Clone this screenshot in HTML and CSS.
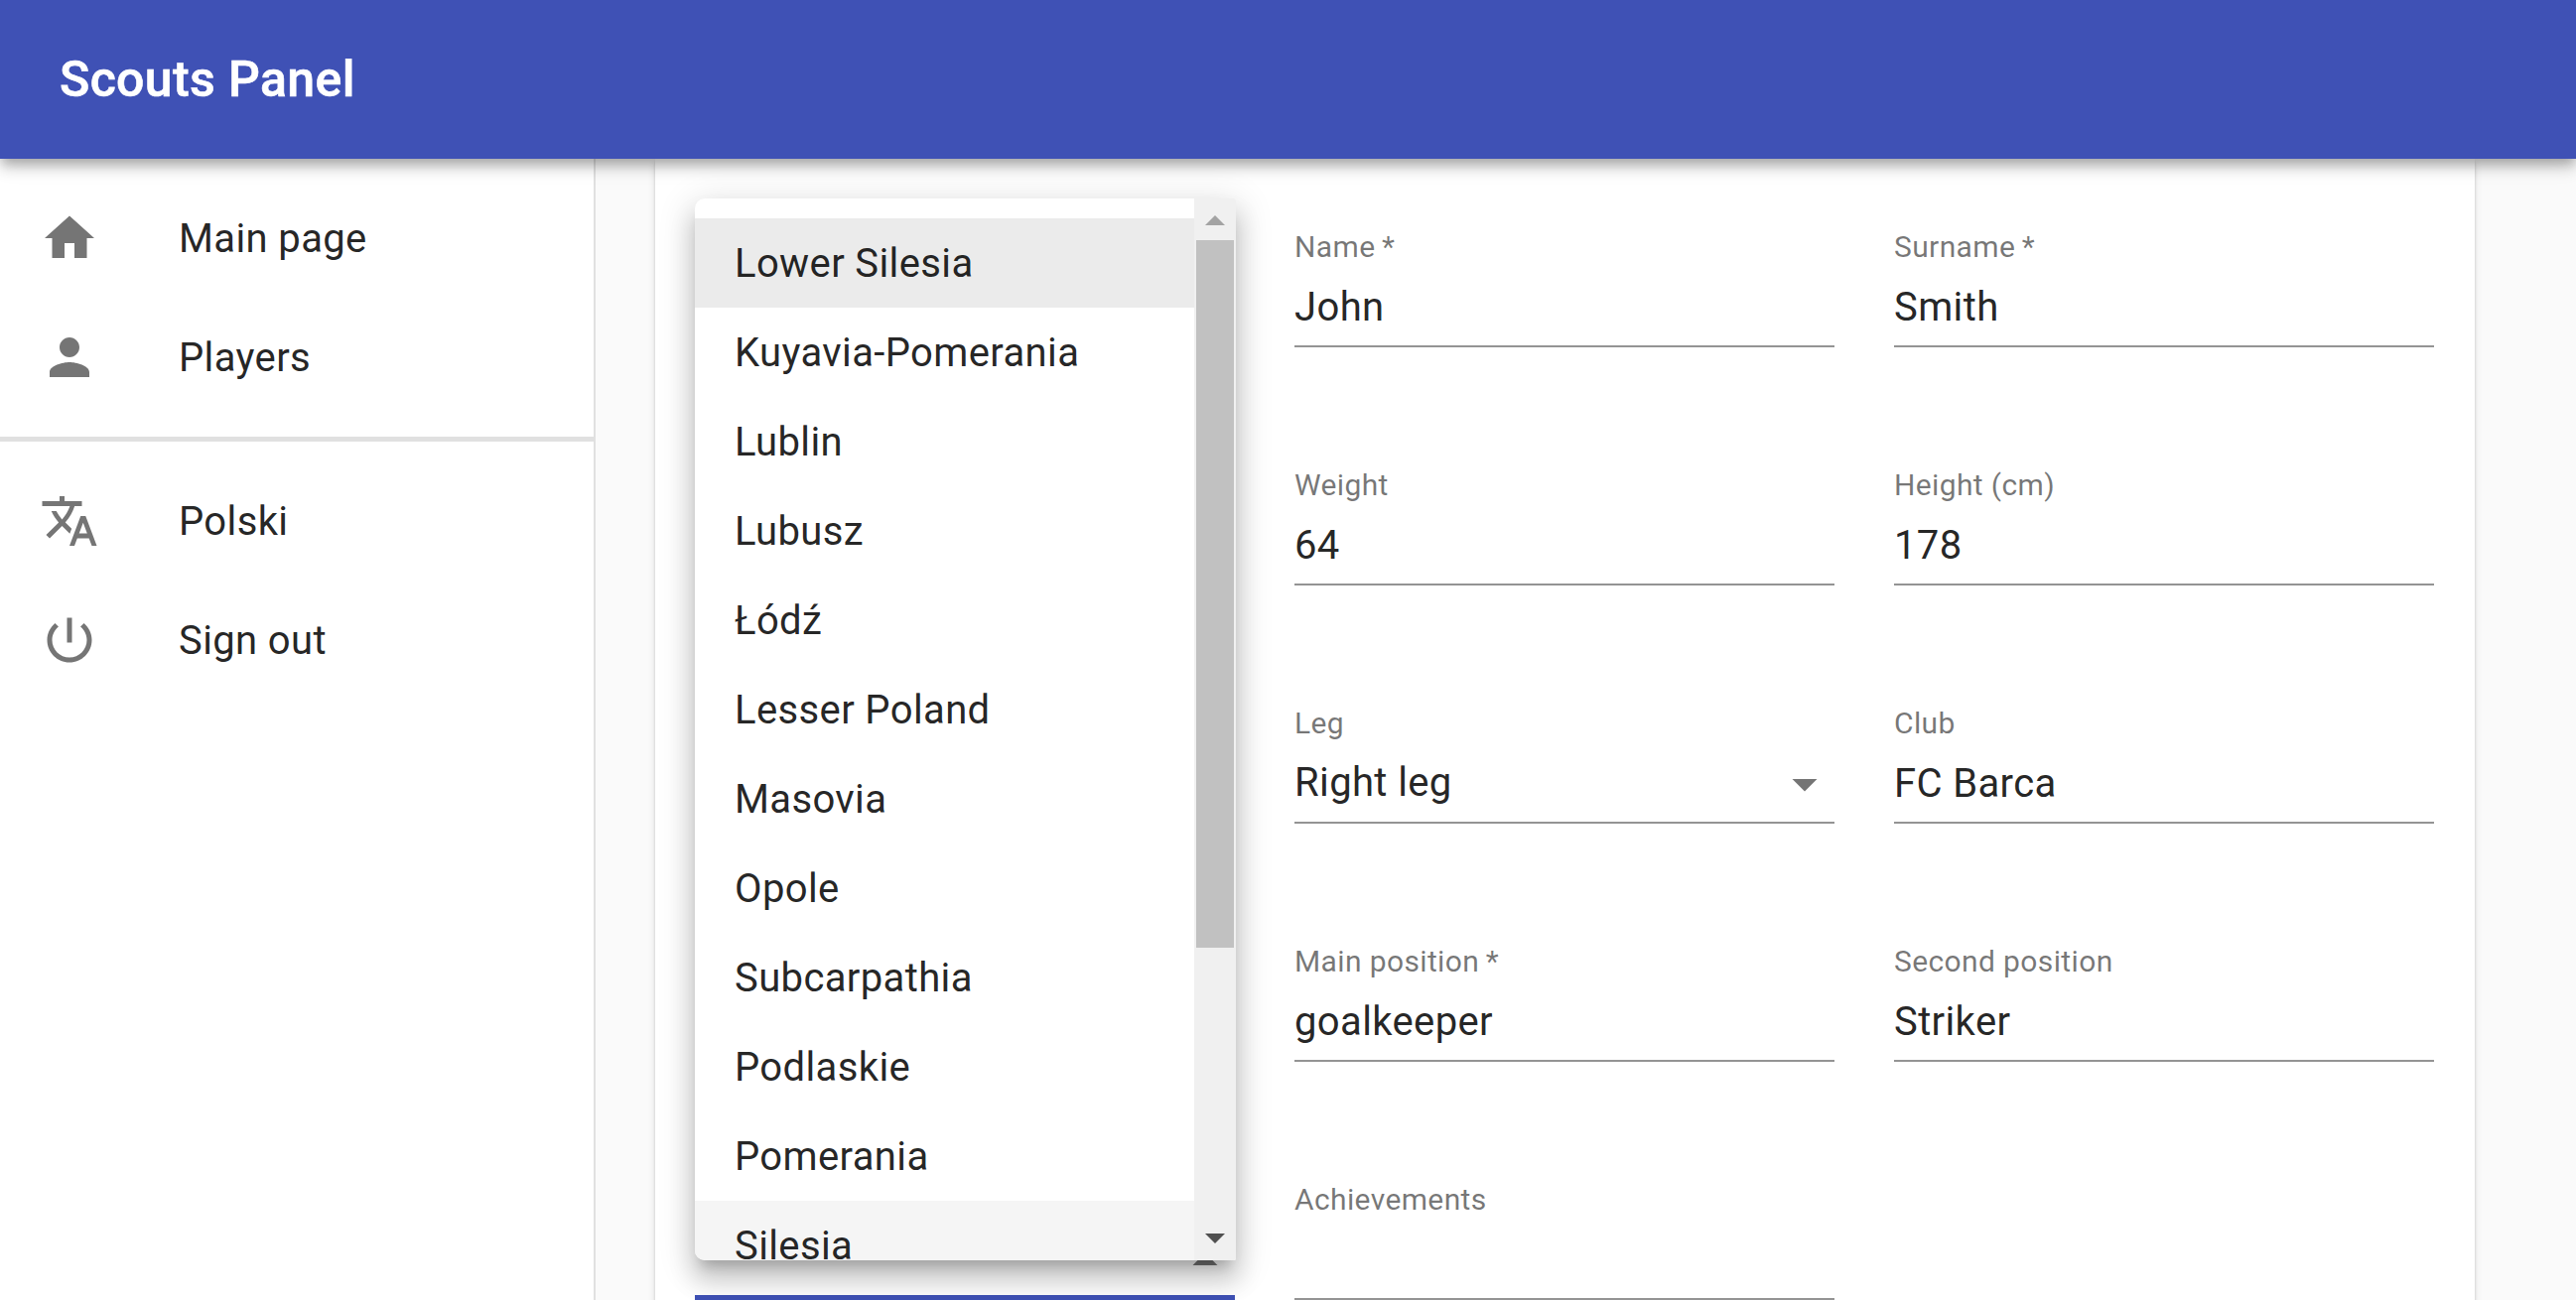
FILE: index.html
```html
<!DOCTYPE html>
<html lang="en">
<head>
<meta charset="utf-8">
<title>Scouts Panel</title>
<link rel="stylesheet" href="styles.css">
</head>
<body>
<div class="app">
  <header class="app-bar"><h1 class="app-title">Scouts Panel</h1></header>
  <div class="body">
    <nav class="drawer">
      <ul class="nav-list">
        <li class="nav-item"><svg class="icon" viewBox="0 0 24 24"><path d="M10 20v-6h4v6h5v-8h3L12 3 2 12h3v8z"/></svg><span class="nav-text">Main page</span></li>
        <li class="nav-item"><svg class="icon" viewBox="0 0 24 24"><path d="M12 12c2.21 0 4-1.79 4-4s-1.79-4-4-4-4 1.790-4 4 1.790 4 4 4zm0 2c-2.670 0-8 1.340-8 4v2h16v-2c0-2.660-5.330-4-8-4z"/></svg><span class="nav-text">Players</span></li>
      </ul>
      <hr class="divider">
      <ul class="nav-list">
        <li class="nav-item"><svg class="icon" viewBox="0 0 24 24"><path d="M12.870 15.070l-2.540-2.510.03-.03c1.740-1.940 2.980-4.170 3.710-6.530H17V4h-7V2H8v2H1v1.990h11.170C11.500 7.920 10.440 9.750 9 11.350 8.070 10.320 7.300 9.190 6.690 8h-2c.73 1.630 1.730 3.170 2.980 4.560l-5.090 5.020L4 19l5-5 3.110 3.110.76-2.040zM18.500 10h-2L12 22h2l1.120-3h4.750L21 22h2l-4.500-12zm-2.620 7l1.620-4.330L19.120 17h-3.240z"/></svg><span class="nav-text">Polski</span></li>
        <li class="nav-item"><svg class="icon" viewBox="0 0 24 24"><path d="M13 3h-2v10h2V3zm4.830 2.170l-1.420 1.420C17.990 7.860 19 9.810 19 12c0 3.870-3.130 7-7 7s-7-3.130-7-7c0-2.190 1.010-4.140 2.580-5.420L6.170 5.170C4.230 6.820 3 9.260 3 12c0 4.970 4.030 9 9 9s9-4.030 9-9c0-2.740-1.230-5.180-3.170-6.830z"/></svg><span class="nav-text">Sign out</span></li>
      </ul>
    </nav>
    <main class="content">
      <form class="card">
        <div class="field middle"><label class="label">Name&thinsp;*</label><div class="value">John</div></div>
        <div class="field"><label class="label">Surname&thinsp;*</label><div class="value">Smith</div></div>
        <div class="field middle"><label class="label">Weight</label><div class="value">64</div></div>
        <div class="field"><label class="label">Height (cm)</label><div class="value">178</div></div>
        <div class="field middle"><label class="label">Leg</label><div class="value select"><span>Right leg</span><svg class="icon" viewBox="0 0 24 24"><path d="M7 10l5 5 5-5z"/></svg></div></div>
        <div class="field"><label class="label">Club</label><div class="value">FC Barca</div></div>
        <div class="field middle"><label class="label">Main position&thinsp;*</label><div class="value">goalkeeper</div></div>
        <div class="field"><label class="label">Second position</label><div class="value">Striker</div></div>
        <div class="field open"><div class="label"></div><div class="value select"><span></span><svg class="icon" viewBox="0 0 24 24"><path d="M7 10l5 5 5-5z"/></svg></div></div>
        <div class="field"><label class="label">Achievements</label><div class="value"></div></div>
      </form>
    </main>
  </div>
  <div class="menu">
    <ul class="options">
      <li class="option focused">Lower Silesia</li>
      <li class="option">Kuyavia-Pomerania</li>
      <li class="option">Lublin</li>
      <li class="option">Lubusz</li>
      <li class="option">Łódź</li>
      <li class="option">Lesser Poland</li>
      <li class="option">Masovia</li>
      <li class="option">Opole</li>
      <li class="option">Subcarpathia</li>
      <li class="option">Podlaskie</li>
      <li class="option">Pomerania</li>
      <li class="option hovered">Silesia</li>
    </ul>
    <div class="scrollbar">
      <svg class="arrow up" viewBox="0 0 20 10"><path d="M0 10L10 0l10 10z"/></svg>
      <div class="thumb"></div>
      <svg class="arrow down" viewBox="0 0 20 10"><path d="M0 0h20L10 10z"/></svg>
    </div>
  </div>
</div>
</body>
</html>
```
FILE: styles.css
```css
* {
  box-sizing: border-box;
}

body {
  margin: 0;
  overflow: hidden;
  background: #fafafa;
  color: rgba(0, 0, 0, 0.87);
  font-family: Roboto, "Liberation Sans", sans-serif;
  font-size: 40px;
  line-height: 60px;
  letter-spacing: 0.00938em;
}

ul {
  margin: 0;
  padding: 0;
  list-style: none;
}

.app {
  position: relative;
  display: flex;
  flex-direction: column;
  height: 1310px;
  overflow: hidden;
}

.app-bar {
  z-index: 1;
  display: flex;
  align-items: center;
  flex: none;
  height: 160px;
  padding: 0 60px;
  background: #3f51b5;
  color: #fff;
  box-shadow: 0 5px 10px -2.5px rgba(0, 0, 0, 0.2), 0 10px 12.5px 0 rgba(0, 0, 0, 0.14), 0 2.5px 25px 0 rgba(0, 0, 0, 0.12);
}

.app-title {
  margin: 0;
  font-size: 50px;
  font-weight: 500;
  line-height: 80px;
  letter-spacing: 0.0075em;
  -webkit-text-stroke: 0.6px #fff;
}

.body {
  display: flex;
  flex: 1;
  min-height: 0;
}

.drawer {
  flex: none;
  width: 600px;
  background: #fff;
  border-right: 2px solid #e0e0e0;
}

.nav-list {
  padding: 20px 0;
}

.nav-item {
  display: flex;
  align-items: center;
  gap: 80px;
  height: 120px;
  padding: 0 40px;
}

.nav-text {
  padding-top: 2px;
}

.icon {
  flex: none;
  width: 60px;
  height: 60px;
  fill: rgba(0, 0, 0, 0.54);
}

.divider {
  height: 5px;
  margin: 0;
  border: 0;
  background: #e0e0e0;
}

.content {
  flex: 1;
  padding: 0 102px 0 60px;
}

.card {
  display: grid;
  grid-template-columns: repeat(3, 544px);
  grid-auto-rows: 120px;
  gap: 120px 60px;
  height: 1300px;
  padding: 70px 40px;
  background: #fff;
  box-shadow: 0 5px 2.5px -2.5px rgba(0, 0, 0, 0.2), 0 2.5px 2.5px 0 rgba(0, 0, 0, 0.14), 0 2.5px 7.5px 0 rgba(0, 0, 0, 0.12);
}

.field {
  display: flex;
  flex-direction: column;
  border-bottom: 2px solid #949494;
}

.field.middle {
  grid-column-start: 2;
}

.field.open {
  border-bottom: 5px solid #3f51b5;
}

.label {
  flex: none;
  height: 40px;
  padding-top: 4px;
  color: rgba(0, 0, 0, 0.54);
  font-size: 30px;
  line-height: 30px;
}

.value {
  flex: none;
  height: 75px;
  padding-top: 16px;
  line-height: 47px;
}

.value.select {
  display: flex;
  justify-content: space-between;
  padding-top: 15px;
}

.select .icon {
  margin-top: -5px;
}

.open .icon {
  transform: rotate(180deg);
}

.menu {
  position: absolute;
  z-index: 2;
  top: 200px;
  left: 700px;
  display: flex;
  width: 545px;
  height: 1070px;
  overflow: hidden;
  border-radius: 10px 2px 2px 10px;
  background: #fff;
  box-shadow: 0 12.5px 12.5px -7.5px rgba(0, 0, 0, 0.2), 0 20px 25px 2.5px rgba(0, 0, 0, 0.14), 0 7.5px 35px 5px rgba(0, 0, 0, 0.12);
}

.options {
  flex: 1;
  padding-top: 20px;
}

.option {
  height: 90px;
  padding: 16px 40px 14px;
}

.option.focused {
  background: #ebebeb;
}

.option.hovered {
  background: #f5f5f5;
}

.scrollbar {
  display: flex;
  flex-direction: column;
  align-items: center;
  width: 42px;
  padding: 17px 0;
  background: #f0f0f0;
}

.arrow {
  flex: none;
  width: 20px;
  height: 10px;
}

.arrow.up {
  fill: #a3a3a3;
}

.arrow.down {
  margin-top: auto;
  fill: #505050;
}

.thumb {
  width: 38px;
  height: 713px;
  margin-top: 15px;
  background: #c1c1c1;
}
```
